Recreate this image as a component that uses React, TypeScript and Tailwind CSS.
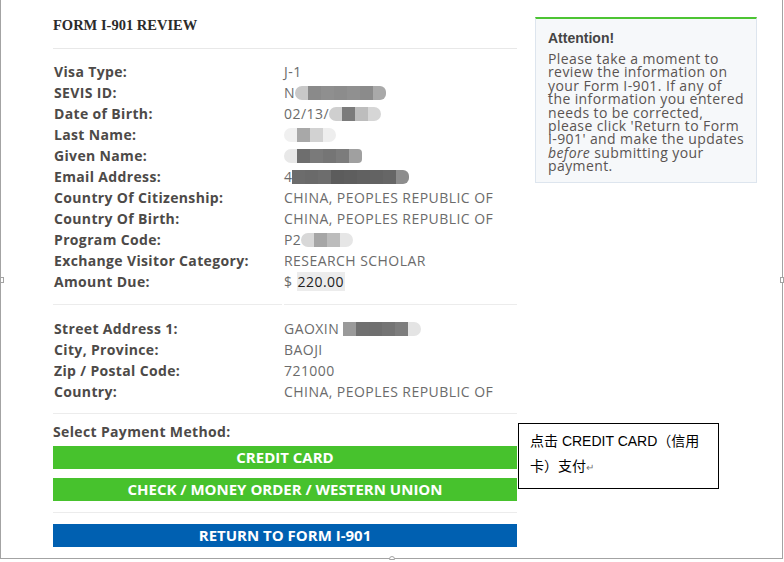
import type { ReactNode } from 'react';

// blurred / pixelated blocks that hide personal data in the original capture
function Blur({ cells }: { cells: string[] }) {
  return (
    <span className="inline-flex items-center align-middle -mt-[2px]">
      {cells.map((c, i) => (
        <span key={i} className={`inline-block w-[13px] h-[14px] ${c}`} />
      ))}
    </span>
  );
}

type Row = { label: string; value: ReactNode };

const personal: Row[] = [
  { label: 'Visa Type:', value: 'J-1' },
  {
    label: 'SEVIS ID:',
    value: (
      <>
        N
        <Blur cells={['bg-[#c8c8c8] rounded-l-full', 'bg-[#8a8a8a]', 'bg-[#8f8f8f]', 'bg-[#8c8c8c]', 'bg-[#909090]', 'bg-[#8b8b8b]', 'bg-[#a9a9a9] rounded-r-md']} />
      </>
    ),
  },
  {
    label: 'Date of Birth:',
    value: (
      <>
        02/13/
        <Blur cells={['bg-[#cfcfcf] rounded-l-full', 'bg-[#7b7b7b]', 'bg-[#bdbdbd]', 'bg-[#d6d6d6] rounded-r-full']} />
      </>
    ),
  },
  {
    label: 'Last Name:',
    value: <Blur cells={['bg-[#f0f0f0] rounded-l-full w-[6px]', 'bg-[#a8a8a8]', 'bg-[#d2d2d2]', 'bg-[#eeeeee] rounded-r-full w-[8px]']} />,
  },
  {
    label: 'Given Name:',
    value: <Blur cells={['bg-[#e8e8e8] rounded-l-full w-[6px]', 'bg-[#6e6e6e]', 'bg-[#7a7a7a]', 'bg-[#757575]', 'bg-[#7c7c7c]', 'bg-[#a0a0a0] rounded-r-sm']} />,
  },
  {
    label: 'Email Address:',
    value: (
      <>
        4
        <Blur cells={['bg-[#6c6c6c]', 'bg-[#6a6a6a]', 'bg-[#6d6d6d]', 'bg-[#5c5c5c]', 'bg-[#5e5e5e]', 'bg-[#616161]', 'bg-[#636363]', 'bg-[#666666]', 'bg-[#8d8d8d] rounded-r-md']} />
      </>
    ),
  },
  { label: 'Country Of Citizenship:', value: 'CHINA, PEOPLES REPUBLIC OF' },
  { label: 'Country Of Birth:', value: 'CHINA, PEOPLES REPUBLIC OF' },
  {
    label: 'Program Code:',
    value: (
      <>
        P2
        <Blur cells={['bg-[#d8d8d8] rounded-l-full w-[8px]', 'bg-[#a6a6a6]', 'bg-[#bcbcbc]', 'bg-[#e6e6e6] rounded-r-full']} />
      </>
    ),
  },
  { label: 'Exchange Visitor Category:', value: 'RESEARCH SCHOLAR' },
  {
    label: 'Amount Due:',
    value: (
      <>
        $ <span className="bg-[#ececec] px-[1px] text-[#222]">220.00</span>
      </>
    ),
  },
];

const address: Row[] = [
  {
    label: 'Street Address 1:',
    value: (
      <>
        GAOXIN{' '}
        <Blur cells={['bg-[#9a9a9a] w-[6px]', 'bg-[#707070]', 'bg-[#6f6f6f]', 'bg-[#747474]', 'bg-[#7d7d7d]', 'bg-[#e4e4e4] rounded-r-full']} />
      </>
    ),
  },
  { label: 'City, Province:', value: 'BAOJI' },
  { label: 'Zip / Postal Code:', value: '721000' },
  { label: 'Country:', value: 'CHINA, PEOPLES REPUBLIC OF' },
];

function Rows({ rows }: { rows: Row[] }) {
  return (
    <div className="grid grid-cols-[231px_1fr]">
      {rows.map((r) => (
        <div key={r.label} className="contents">
          <div className="pl-[1px] font-bold text-[#4d4a48] leading-[21px] tracking-[0.35px]">{r.label}</div>
          <div className="text-[#6b6b6b] leading-[21px] tracking-[0.45px] whitespace-nowrap">{r.value}</div>
        </div>
      ))}
    </div>
  );
}

function App() {
  return (
    <div className="relative w-[784px] h-[562px] bg-white overflow-hidden" style={{ fontFamily: '"Open Sans", sans-serif' }}>
      {/* word picture frame */}
      <div className="w-[783px] h-[559px] border-l border-r border-b border-[#a3a3a3] flex pl-[52px] pt-[14px] text-[14px]">
        <div className="w-[464px]">
          <h1 className="font-bold text-[14.5px] text-[#2b2b2b] leading-[22px] pb-[12px] border-b border-[#e8e8e8]" style={{ fontFamily: '"Liberation Serif", serif' }}>
            FORM I-901 REVIEW
          </h1>

          <div className="pt-[12px] pb-[12px]">
            <Rows rows={personal} />
          </div>
          <div className="grid grid-cols-[229px_1fr] gap-x-[2px]">
            <div className="border-b border-[#ececec]" />
            <div className="border-b border-[#ececec]" />
          </div>

          <div className="pt-[13px] pb-[11px] border-b border-[#ececec]">
            <Rows rows={address} />
          </div>

          <div className="pt-[7px]">
            <div className="font-bold text-[#4d4a48] leading-[21px] tracking-[0.35px]">Select Payment Method:</div>
            <div className="mt-[4px] h-[23px] bg-[#47c22d] text-white text-[15px] font-bold flex items-center justify-center">CREDIT CARD</div>
            <div className="mt-[9px] h-[23px] bg-[#47c22d] text-white text-[15px] font-bold flex items-center justify-center">CHECK / MONEY ORDER / WESTERN UNION</div>
            <div className="mt-[11px] border-b border-[#ececec]" />
            <div className="mt-[11px] h-[23px] bg-[#0060b1] text-white text-[15px] font-bold flex items-center justify-center">RETURN TO FORM I-901</div>
          </div>
        </div>

        <div className="ml-[18px] mt-[3px] w-[222px] h-[166px] bg-[#f6f8fa] border border-[#dde5ee] border-t-2 border-t-[#4cc433] pl-[12px] pr-[10px] pt-[10px]">
          <div className="font-bold text-[14px] text-[#454545] leading-[18px]" style={{ fontFamily: '"Liberation Sans", sans-serif' }}>
            Attention!
          </div>
          <p className="mt-[5px] text-[14px] leading-[13.4px] tracking-[0.4px] text-[#5a5452]">
            Please take a moment to review the information on your Form I-901. If any of the information you entered needs to be corrected, please click 'Return to Form I-901' and make the updates <i>before</i> submitting your payment.
          </p>
        </div>
      </div>

      {/* annotation callout */}
      <div
        className="absolute left-[518px] top-[423px] w-[201px] h-[66px] bg-white border border-black px-[11px] pt-[5px] text-[14px] leading-[25px] text-black"
        style={{ fontFamily: '"Liberation Sans", "Noto Sans CJK SC", sans-serif' }}
      >
        点击 CREDIT CARD（信用卡）支付<span className="text-[10px] text-[#777]">↵</span>
      </div>

      {/* frame handles */}
      <div className="absolute left-0 top-[277px] w-[4px] h-[6px] border border-[#a3a3a3] bg-white" />
      <div className="absolute left-[389px] top-[556px] w-[6px] h-[4px] border border-[#a3a3a3] bg-white rounded-t-sm" />
      <div className="absolute right-0 top-[277px] w-[4px] h-[6px] border border-[#a3a3a3] bg-white" />
    </div>
  );
}

export default App;
